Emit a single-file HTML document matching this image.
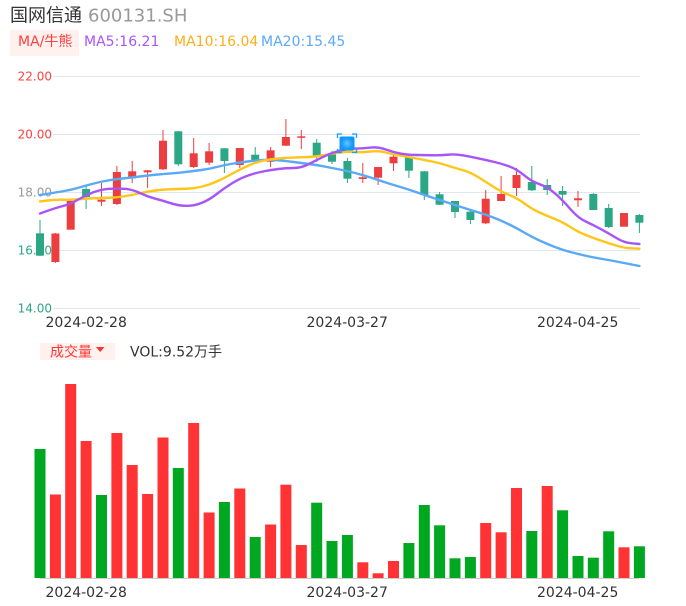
<!DOCTYPE html>
<html><head><meta charset="utf-8"><style>
html,body{margin:0;padding:0;background:#fff;width:686px;height:606px;overflow:hidden}
svg{display:block}
text{font-family:"DejaVu Sans","Noto Sans CJK SC",sans-serif}
</style></head><body>
<svg width="686" height="606" viewBox="0 0 686 606" xmlns="http://www.w3.org/2000/svg">
<text x="10" y="21.500" font-size="18" fill="#333" style='font-family:"WenQuanYi Zen Hei","Noto Sans CJK SC",sans-serif'>国网信通</text>
<text x="88" y="21.500" font-size="18" fill="#999">600131.SH</text>
<rect x="10" y="30" width="69" height="26" fill="#fff1ee"/>
<text x="18" y="46" font-size="14" fill="#ff3f3f">MA/牛熊</text>
<text x="84" y="46" font-size="14" fill="#a855f7">MA5:16.21</text>
<text x="174" y="46" font-size="14" fill="#ffae1a">MA10:16.04</text>
<text x="261" y="46" font-size="14" fill="#5aa9ff">MA20:15.45</text>

<g fill="none" stroke="#e0e6f1" stroke-width="1">
<path d="M53 76.500H640M53 134.500H640M53 192.500H640M53 250.500H640M53 308.500H640"/>
</g>
<g font-size="12" text-anchor="end">
<text x="52" y="80.500" fill="#ff4040">22.00</text>
<text x="52" y="138.500" fill="#ff4040">20.00</text>
<text x="52" y="196.500" fill="#999">18.00</text>
<text x="52" y="254.500" fill="#2ba786">16.00</text>
<text x="52" y="312.500" fill="#2ba786">14.00</text>
</g>
<g font-size="14" fill="#333">
<text x="45.500" y="327">2024-02-28</text>
<text x="306.500" y="327">2024-03-27</text>
<text x="537" y="327">2024-04-25</text>
</g>

<!-- red wicks -->
<path fill="none" stroke="#ec3e3e" stroke-width="1" d="M55.400 233V263M101.500 183V206M116.900 166V205M132.200 161V183M147.600 170V188M163 130V170M193.700 138V168M209.100 143V165M239.800 148V168M270.600 147V167M285.900 119V146M301.300 130V149M362.800 163V183M378.100 167V185M393.500 155V171M485.700 190V224M501.100 176V201M516.500 168V196M578 191V207"/>
<!-- green wicks -->
<path fill="none" stroke="#2ba786" stroke-width="1" d="M40 220V256M86.100 186V209M178.300 131V166M224.400 148V173M255.200 147V161M316.700 139V162M332 151V164M347.400 158V183M408.900 155V178M424.300 171V200M439.600 192V205M455 201V218M470.400 209V224M531.800 166V191M547.200 179V195M562.600 186V206M593.300 193V210M608.700 204V228M639.400 214V233"/>
<!-- red bodies -->
<g fill="#ec3e3e">
<rect x="51.400" y="233.500" width="8" height="28.500"/>
<rect x="66.700" y="200.700" width="8" height="29"/>
<rect x="97.500" y="199.700" width="8" height="2"/>
<rect x="112.900" y="172" width="8" height="32"/>
<rect x="128.200" y="171.300" width="8" height="7"/>
<rect x="143.600" y="170.300" width="8" height="2"/>
<rect x="159" y="140.700" width="8" height="28.600"/>
<rect x="189.700" y="153.300" width="8" height="13.700"/>
<rect x="205.100" y="151.300" width="8" height="11.400"/>
<rect x="235.800" y="148" width="8" height="17"/>
<rect x="266.600" y="150.300" width="8" height="11.400"/>
<rect x="281.900" y="137" width="8" height="8.700"/>
<rect x="297.300" y="136.300" width="8" height="1.500"/>
<rect x="358.800" y="177.300" width="8" height="1.700"/>
<rect x="374.100" y="167" width="8" height="10.700"/>
<rect x="389.500" y="156.700" width="8" height="6.600"/>
<rect x="481.700" y="198.700" width="8" height="24.600"/>
<rect x="497.100" y="194" width="8" height="7"/>
<rect x="512.500" y="175" width="8" height="13"/>
<rect x="574" y="198.300" width="8" height="2"/>
<rect x="620" y="213" width="8" height="13.700"/>
</g>
<!-- green bodies -->
<g fill="#2ba786">
<rect x="36" y="233.300" width="8" height="22.400"/>
<rect x="82.100" y="189" width="8" height="8"/>
<rect x="174.300" y="131.300" width="8" height="33"/>
<rect x="220.400" y="148.300" width="8" height="12.700"/>
<rect x="251.200" y="154.700" width="8" height="6"/>
<rect x="312.700" y="142.700" width="8" height="14"/>
<rect x="328" y="153.300" width="8" height="8.400"/>
<rect x="343.400" y="161" width="8" height="17.700"/>
<rect x="404.900" y="156.700" width="8" height="14"/>
<rect x="420.300" y="171.300" width="8" height="23.700"/>
<rect x="435.600" y="194.300" width="8" height="10.400"/>
<rect x="451" y="201" width="8" height="11"/>
<rect x="466.400" y="211.700" width="8" height="8.300"/>
<rect x="527.800" y="182" width="8" height="8.300"/>
<rect x="543.200" y="185" width="8" height="5"/>
<rect x="558.600" y="191" width="8" height="3.700"/>
<rect x="589.300" y="194" width="8" height="16"/>
<rect x="604.700" y="208" width="8" height="19"/>
<rect x="635.400" y="215" width="8" height="7.700"/>
</g>

<g fill="none" stroke-width="2.400" stroke-linejoin="round" stroke-linecap="round">
<path stroke="#5aa9f5" d="M40 195L47.700 193.750Q55.400 192.500 63 191.250 70.700 190 78.400 187.750 86.100 185.500 93.800 183.500 101.500 181.500 109.200 180.250 116.900 179 124.500 178.250 132.200 177.500 139.900 176.500 147.600 175.500 155.300 174.750 163 174 170.700 173.400 178.300 172.800 186 171.900 193.700 171 201.400 170 209.100 169 216.700 167 224.400 165 232.100 163.750 239.800 162.500 247.500 161.500 255.200 160.500 262.900 160 270.600 159.500 278.200 160.250 285.900 161 293.600 162 301.300 163 309 164 316.700 165 324.400 166.500 332 168 339.700 169.500 347.400 171 355.100 173 362.800 175 370.500 177.500 378.100 180 385.800 182.500 393.500 185 401.200 187.250 408.900 189.500 416.600 192.250 424.300 195 432 197.500 439.600 200 447.300 202.500 455 205 462.700 207.500 470.400 210 478 212.250 485.700 214.500 493.400 217.500 501.100 220.500 508.800 224.250 516.500 228 524.200 232.500 531.800 237 539.500 240.500 547.200 244 554.900 247 562.600 250 570.300 252 578 254 585.700 255.750 593.300 257.500 601 258.750 608.700 260 616.400 261.500 624 263 631.700 264.500L639.400 266"/>
<path stroke="#ffc61a" d="M40 201.500L47.700 200.500Q55.400 199.500 63 199.750 70.700 200 78.400 199.250 86.100 198.500 93.800 198.250 101.500 198 109.200 197.750 116.900 197.500 124.500 196.250 132.200 195 139.900 193.250 147.600 191.500 155.300 190.500 163 189.500 170.700 189.250 178.300 189 186 188.750 193.700 188.500 201.400 186.750 209.100 185 216.700 181.500 224.400 178 232.100 173.750 239.800 169.500 247.500 166 255.200 162.500 262.900 160.750 270.600 159 278.200 158.500 285.900 158 293.600 157.600 301.300 157.200 309 157 316.700 156.700 324.400 155.100 332 153.500 339.700 152.500 347.400 151.500 355.100 152 362.800 152.500 370.500 151.500 378.100 150.500 385.800 152.500 393.500 154.500 401.200 155.750 408.900 157 416.600 158.500 424.300 160 432 161.500 439.600 163 447.300 165.500 455 168 462.700 170.150 470.400 172.300 478 177 485.700 181.700 493.400 186.700 501.100 191.700 508.800 194.700 516.500 197.700 524.200 203.350 531.800 209 539.500 212.500 547.200 216 554.900 219 562.600 222 570.300 227 578 232 585.700 235 593.300 238 601 240.650 608.700 243.300 616.400 245.650 624 248 631.700 248.350L639.400 248.700"/>
<path stroke="#a855f7" d="M40 213.500L47.700 210.750Q55.400 208 63 206 70.700 204 78.400 199.500 86.100 195 93.800 192.150 101.500 189.300 109.200 188.800 116.900 188.300 124.500 188.800 132.200 189.300 139.900 193 147.600 196.700 155.300 198.700 163 200.700 170.700 203.200 178.300 205.700 186 205.850 193.700 206 201.400 203 209.100 200 216.700 194 224.400 188 232.100 183.250 239.800 178.500 247.500 175.750 255.200 173 262.900 171.500 270.600 170 278.200 169 285.900 168 293.600 168 301.300 168 309 164 316.700 160 324.400 156.350 332 152.700 339.700 150.700 347.400 148.700 355.100 148.600 362.800 148.500 370.500 147.600 378.100 146.700 385.800 149.500 393.500 152.300 401.200 153.650 408.900 155 416.600 155 424.300 155 432 155.250 439.600 155.500 447.300 154.750 455 154 462.700 155.350 470.400 156.700 478 158.350 485.700 160 493.400 161.750 501.100 163.500 508.800 166.250 516.500 169 524.200 175.350 531.800 181.700 539.500 184.200 547.200 186.700 554.900 193.350 562.600 200 570.300 209 578 218 585.700 221.500 593.300 225 601 229.150 608.700 233.300 616.400 238 624 242.700 631.700 243.350L639.400 244"/>
</g>

<!-- marker -->
<defs><radialGradient id="mk"><stop offset="0" stop-color="#6fc2ff"/><stop offset="0.700" stop-color="#1a9dff"/><stop offset="1" stop-color="#0a95ff"/></radialGradient></defs>
<rect x="339.500" y="136.500" width="15" height="14" rx="2" fill="url(#mk)"/>
<path fill="none" stroke="#1e9bff" stroke-width="1.300" d="M337.500 138V134H342M352 134H356.500V138M337.500 149V152.500H342M352 152.500H356.500V149"/>

<!-- volume header -->
<rect x="40" y="343" width="75" height="17" fill="#fff1ee"/>
<text x="50" y="356.500" font-size="14" fill="#ff3333">成交量</text>
<path d="M96 347H104.500L100.200 352Z" fill="#ff3333"/>
<text x="130" y="356.500" font-size="14" fill="#333">VOL:9.52万手</text>

<path d="M40 578.500H639" stroke="#ccc" stroke-width="1"/>
<g fill="#ff3333">
<rect x="49.900" y="494.500" width="11" height="83.500"/>
<rect x="65.200" y="384" width="11" height="194"/>
<rect x="80.600" y="441" width="11" height="137"/>
<rect x="111.400" y="433" width="11" height="145"/>
<rect x="126.700" y="465" width="11" height="113"/>
<rect x="142.100" y="494" width="11" height="84"/>
<rect x="157.500" y="437.500" width="11" height="140.500"/>
<rect x="188.200" y="423" width="11" height="155"/>
<rect x="203.600" y="512.500" width="11" height="65.500"/>
<rect x="234.300" y="488.500" width="11" height="89.500"/>
<rect x="265.100" y="524.500" width="11" height="53.500"/>
<rect x="280.400" y="484.700" width="11" height="93.300"/>
<rect x="295.800" y="545" width="11" height="33"/>
<rect x="357.300" y="562.300" width="11" height="15.700"/>
<rect x="372.600" y="573.300" width="11" height="4.700"/>
<rect x="388" y="561" width="11" height="17"/>
<rect x="480.200" y="523" width="11" height="55"/>
<rect x="495.600" y="532.300" width="11" height="45.700"/>
<rect x="511" y="488" width="11" height="90"/>
<rect x="541.700" y="486" width="11" height="92"/>
<rect x="618.500" y="547.300" width="11" height="30.700"/>
</g>
<g fill="#00a822">
<rect x="34.500" y="449" width="11" height="129"/>
<rect x="96" y="495" width="11" height="83"/>
<rect x="172.800" y="468" width="11" height="110"/>
<rect x="218.900" y="502" width="11" height="76"/>
<rect x="249.700" y="537" width="11" height="41"/>
<rect x="311.200" y="502.700" width="11" height="75.300"/>
<rect x="326.500" y="541" width="11" height="37"/>
<rect x="341.900" y="535" width="11" height="43"/>
<rect x="403.400" y="543" width="11" height="35"/>
<rect x="418.800" y="505" width="11" height="73"/>
<rect x="434.100" y="525.300" width="11" height="52.700"/>
<rect x="449.500" y="558.300" width="11" height="19.700"/>
<rect x="464.900" y="557" width="11" height="21"/>
<rect x="526.300" y="531" width="11" height="47"/>
<rect x="557.100" y="510.300" width="11" height="67.700"/>
<rect x="572.500" y="556" width="11" height="22"/>
<rect x="587.800" y="557.700" width="11" height="20.300"/>
<rect x="603.200" y="531.300" width="11" height="46.700"/>
<rect x="633.900" y="546.300" width="11" height="31.700"/>
</g>
<g font-size="14" fill="#333">
<text x="45.500" y="597">2024-02-28</text>
<text x="306.500" y="597">2024-03-27</text>
<text x="537" y="597">2024-04-25</text>
</g>
</svg>
</body></html>
